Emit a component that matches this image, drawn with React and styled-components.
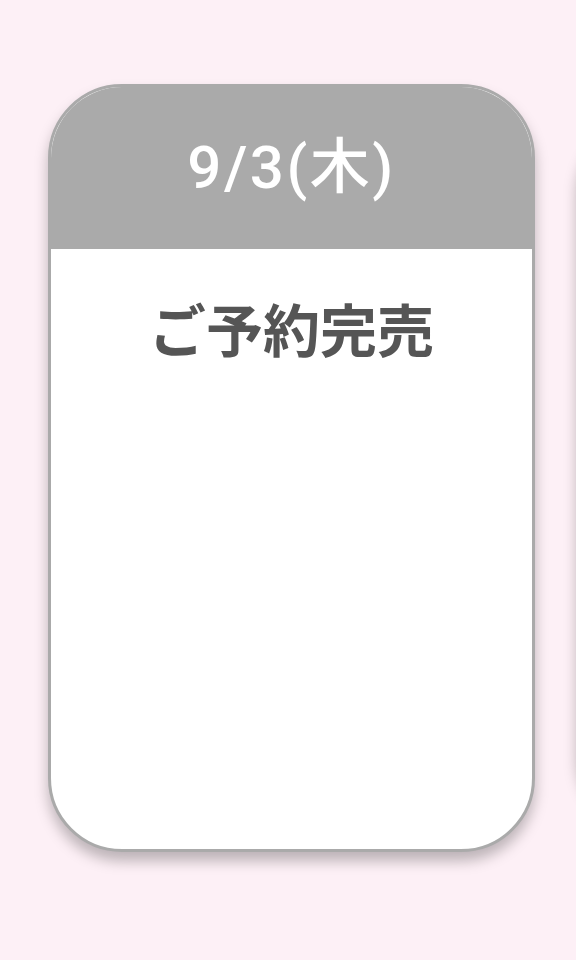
import React from "react";
import styled, { createGlobalStyle } from "styled-components";

const Global = createGlobalStyle`
  html, body { margin: 0; padding: 0; background: #fdf0f6; }
  body { font-family: "Noto Sans CJK JP", "Noto Sans", sans-serif; }
`;

const Page = styled.div`
  width: 576px;
  height: 960px;
  overflow: hidden;
  background: #fdf0f6;
`;

const Track = styled.div`
  display: flex;
  align-items: center;
  gap: 42px;
  padding: 84px 0 0 48px;
  height: 768px;
`;

const Card = styled.div`
  flex: 0 0 auto;
  box-sizing: border-box;
  width: 487px;
  height: ${(p) => (p.$side ? "712px" : "768px")};
  border: 3px solid #aaaaaa;
  border-radius: 74px;
  background: #ffffff;
  overflow: hidden;
  display: flex;
  flex-direction: column;
  box-shadow: 0 9px 14px rgba(0, 0, 0, 0.26);
`;

const Header = styled.div`
  height: 162px;
  flex: 0 0 auto;
  background: #aaaaaa;
  display: flex;
  align-items: center;
  justify-content: center;
  color: #ffffff;
  font-family: Roboto, "Noto Sans CJK JP", sans-serif;
  font-size: 60px;
  font-weight: 500;
  letter-spacing: 2.5px;
  padding-bottom: 14px;
  box-sizing: border-box;
`;

const Body = styled.div`
  flex: 1;
  display: flex;
  flex-direction: column;
  align-items: center;
  padding-top: 44px;
`;

const Status = styled.div`
  color: #555555;
  font-size: 57px;
  font-weight: 700;
  line-height: 1.2;
`;

export default function App() {
  return (
    <>
      <Global />
      <Page>
        <Track>
          <Card>
            <Header>9/3(木)</Header>
            <Body>
              <Status>ご予約完売</Status>
            </Body>
          </Card>
          <Card $side aria-hidden="true">
            <Header />
            <Body />
          </Card>
        </Track>
      </Page>
    </>
  );
}
